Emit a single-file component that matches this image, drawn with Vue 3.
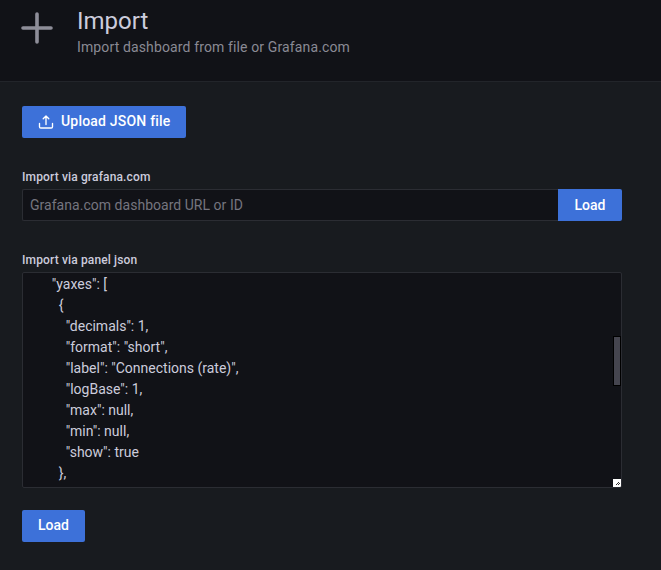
<script setup>
const lines = [
  '      "yaxes": [',
  '        {',
  '          "decimals": 1,',
  '          "format": "short",',
  '          "label": "Connections (rate)",',
  '          "logBase": 1,',
  '          "max": null,',
  '          "min": null,',
  '          "show": true',
  '        },',
]
</script>

<template>
  <div class="page">
    <header class="head">
      <svg class="plus" width="32" height="32" viewBox="0 0 32 32" aria-hidden="true">
        <path d="M16 2v28M2 16h28" fill="none" stroke="#8e8e99" stroke-width="3.6" stroke-linecap="round" />
      </svg>
      <div class="titles">
        <h1>Import</h1>
        <p>Import dashboard from file or Grafana.com</p>
      </div>
    </header>
    <main class="body">
      <button class="btn upload">
        <svg width="16" height="16" viewBox="0 0 16 16" fill="none" stroke="#fff" stroke-width="1.35" stroke-linecap="round" stroke-linejoin="round" aria-hidden="true">
          <path d="M1.5 9.5v3.2c0 .8.6 1.3 1.3 1.3h10.400c.7 0 1.300-.5 1.300-1.300V9.500" />
          <path d="M8 10.500V2.200M5.200 4.800 8 2l2.800 2.800" />
        </svg>
        Upload JSON file
      </button>

      <label class="lbl first">Import via grafana.com</label>
      <div class="row">
        <div class="input">Grafana.com dashboard URL or ID</div>
        <button class="btn join">Load</button>
      </div>

      <label class="lbl second">Import via panel json</label>
      <div class="area">
        <div v-for="(l, i) in lines" :key="i" class="line">{{ l }}</div>
        <div class="thumb"></div>
        <div class="grip">
          <svg width="8" height="8" viewBox="0 0 8 8" aria-hidden="true">
            <path d="M5 3h1v1H5zM4 4h1v1H4zM6 4h1v1H6zM3 5h1v1H3zM5 5h1v1H5z" fill="#333" />
          </svg>
        </div>
      </div>

      <button class="btn bottom">Load</button>
    </main>
  </div>
</template>

<style scoped>
.page {
  width: 661px;
  height: 570px;
  overflow: hidden;
  background: #181b1f;
  color: #ccccdc;
  font-family: Roboto, "Liberation Sans", sans-serif;
  font-size: 14px;
}
.head {
  height: 81px;
  box-sizing: border-box;
  background: #111217;
  display: flex;
  align-items: flex-start;
  padding: 12px 0 0 21px;
}
.plus {
  flex: none;
}
.titles {
  margin-left: 24px;
  margin-top: -5px;
}
h1 {
  margin: 0;
  font-size: 24px;
  font-weight: 400;
  line-height: 28px;
  color: #ccccdc;
}
p {
  margin: 2px 0 0;
  line-height: 21px;
  letter-spacing: 0.13px;
  color: #8a8a94;
}
.body {
  border-top: 1px solid #22252a;
  padding: 24px 39px 0 22px;
}
.btn {
  height: 32px;
  border: 0;
  border-radius: 2px;
  background: #3d71d9;
  color: #fff;
  font: 500 14px Roboto, "Liberation Sans", sans-serif;
  padding: 0 16px;
  display: flex;
  align-items: center;
  white-space: nowrap;
}
.upload {
  width: 164px;
  padding-bottom: 2px;
  letter-spacing: 0.2px;
}
.upload svg {
  flex: none;
  margin: 2px 7px 0 0;
}
.lbl {
  display: block;
  font-size: 12px;
  font-weight: 500;
  line-height: 16px;
  letter-spacing: 0.14px;
  color: #ccccdc;
}
.first {
  margin-top: 31px;
  margin-bottom: 4px;
}
.second {
  margin-top: 31px;
  margin-bottom: 4px;
}
.row {
  display: flex;
  height: 32px;
}
.input {
  flex: 1;
  box-sizing: border-box;
  background: #111217;
  border: 1px solid #2b2d33;
  border-right: 0;
  border-radius: 2px 0 0 2px;
  padding-left: 7px;
  line-height: 30px;
  letter-spacing: 0.03px;
  color: #75757f;
}
.join {
  width: 64px;
  justify-content: center;
  padding: 0;
  border-radius: 0 2px 2px 0;
}
.area {
  position: relative;
  height: 216px;
  box-sizing: border-box;
  background: #111217;
  border: 1px solid #2b2d33;
  border-radius: 2px;
  padding: 1px 8px 0;
  overflow: hidden;
}
.line {
  white-space: pre;
  height: 21px;
  line-height: 21px;
  color: #ccccdc;
}
.thumb {
  position: absolute;
  right: 0;
  top: 63px;
  width: 8px;
  height: 50px;
  box-sizing: border-box;
  background: #45454f;
  border: 1px solid #000;
}
.grip {
  position: absolute;
  right: 0;
  bottom: 0;
  width: 8px;
  height: 8px;
  background: #fff;
  display: flex;
}
.bottom {
  margin-top: 22px;
  width: 63px;
  justify-content: center;
  padding: 0 0 2px;
}
</style>
